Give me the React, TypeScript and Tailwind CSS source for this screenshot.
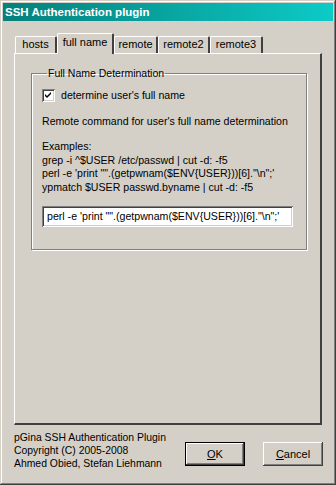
import React from 'react';

const TABS = [
  { label: 'hosts', w: 'w-[42px]' },
  { label: 'full name', w: 'w-[57px]', active: true },
  { label: 'remote', w: 'w-[44px]' },
  { label: 'remote2', w: 'w-[52px]' },
  { label: 'remote3', w: 'w-[53px]' },
];

const raised =
  'shadow-[inset_-1px_-1px_#404040,inset_1px_1px_#ffffff,inset_-2px_-2px_#808080,inset_2px_2px_#d4d0c8]';
const sunken =
  'shadow-[inset_1px_1px_#808080,inset_-1px_-1px_#ffffff,inset_2px_2px_#404040,inset_-2px_-2px_#d4d0c8]';

function Tab({ label, w, active }: { label: string; w: string; active?: boolean }) {
  if (active) {
    return (
      <div
        className={`${w} h-[21px] -mb-[1px] relative z-10 bg-[#d4d0c8] border-l border-t border-white border-r-2 border-r-[#404040] rounded-t-[2px] flex items-start justify-center pt-[2px]`}
      >
        {label}
      </div>
    );
  }
  return (
    <div
      className={`${w} h-[17px] bg-[#d4d0c8] border-l border-t border-white border-r-2 border-r-[#404040] rounded-t-[2px] flex items-start justify-center pt-[1px]`}
    >
      {label}
    </div>
  );
}

function Button({ children, isDefault }: { children: React.ReactNode; isDefault?: boolean }) {
  return (
    <div className={`w-[60px] h-[24px] ${isDefault ? 'border border-black' : ''}`}>
      <div className={`w-full h-full bg-[#d4d0c8] ${raised} flex items-center justify-center`}>{children}</div>
    </div>
  );
}

export default function App() {
  return (
    <div className="w-[336px] h-[485px] bg-[#d4d0c8] p-[3px] flex flex-col text-[11px] leading-[13px] text-black font-['Tahoma','Liberation_Sans',sans-serif] shadow-[inset_-1px_-1px_#404040,inset_1px_1px_#d4d0c8,inset_-2px_-2px_#808080,inset_2px_2px_#ffffff]">
      {/* Title bar */}
      <div className="h-[18px] bg-gradient-to-r from-[#06807c] to-[#0ccbc7] flex items-center pl-[2px] text-white font-bold text-[11.5px]">
        SSH Authentication plugin
      </div>

      {/* Tabs */}
      <div className="mt-[12px] ml-[12px] flex items-end">
        {TABS.map((t) => (
          <Tab key={t.label} {...t} />
        ))}
      </div>

      {/* Tab panel */}
      <div className="ml-[11px] w-[308px] h-[372px] border-l border-t border-white border-r-2 border-b-2 border-r-[#404040] border-b-[#404040] pt-[13px] pl-[16px]">
        <fieldset className="w-[276px] h-[183px] border border-[#808080] shadow-[1px_1px_0_#ffffff,inset_1px_1px_0_#ffffff] pl-[10px] text-[10.6px] whitespace-nowrap">
          <legend className="ml-[5px] px-[1px] text-[10.5px]">Full Name Determination</legend>
          <div className="mt-[9px] flex items-center gap-[6px]">
            <div className={`w-[13px] h-[13px] bg-white ${sunken} flex items-center justify-center`}>
              <svg width="7" height="7" viewBox="0 0 7 7">
                <path d="M0 2 L2 4 L6 0 L6 2 L2 6 L0 4 Z" fill="#000" />
              </svg>
            </div>
            <span>determine user's full name</span>
          </div>
          <p className="mt-[13px]">Remote command for user's full name determination</p>
          <div className="mt-[12px] leading-[13.5px]">
            <p>Examples:</p>
            <p>grep -i ^$USER /etc/passwd | cut -d: -f5</p>
            <p>perl -e 'print "".(getpwnam($ENV{'{'}USER{'}'}))[6]."\n";'</p>
            <p>ypmatch $USER passwd.byname | cut -d: -f5</p>
          </div>
          <div className={`mt-[12px] w-[251px] h-[21px] bg-white ${sunken} px-[5px] flex items-center overflow-hidden`}>
            perl -e 'print "".(getpwnam($ENV{'{'}USER{'}'}))[6]."\n";'
          </div>
        </fieldset>
      </div>

      {/* Footer */}
      <div className="ml-[11px] mt-[6px] flex items-start">
        <div className="flex flex-col text-[10.4px]">
          <span>pGina SSH Authentication Plugin</span>
          <span>Copyright (C) 2005-2008</span>
          <span>Ahmed Obied, Stefan Liehmann</span>
        </div>
        <div className="ml-auto mr-[10px] mt-[11px] flex gap-[18px]">
          <Button isDefault>
            <span className="underline">O</span>K
          </Button>
          <Button>
            <span className="underline">C</span>ancel
          </Button>
        </div>
      </div>
    </div>
  );
}
